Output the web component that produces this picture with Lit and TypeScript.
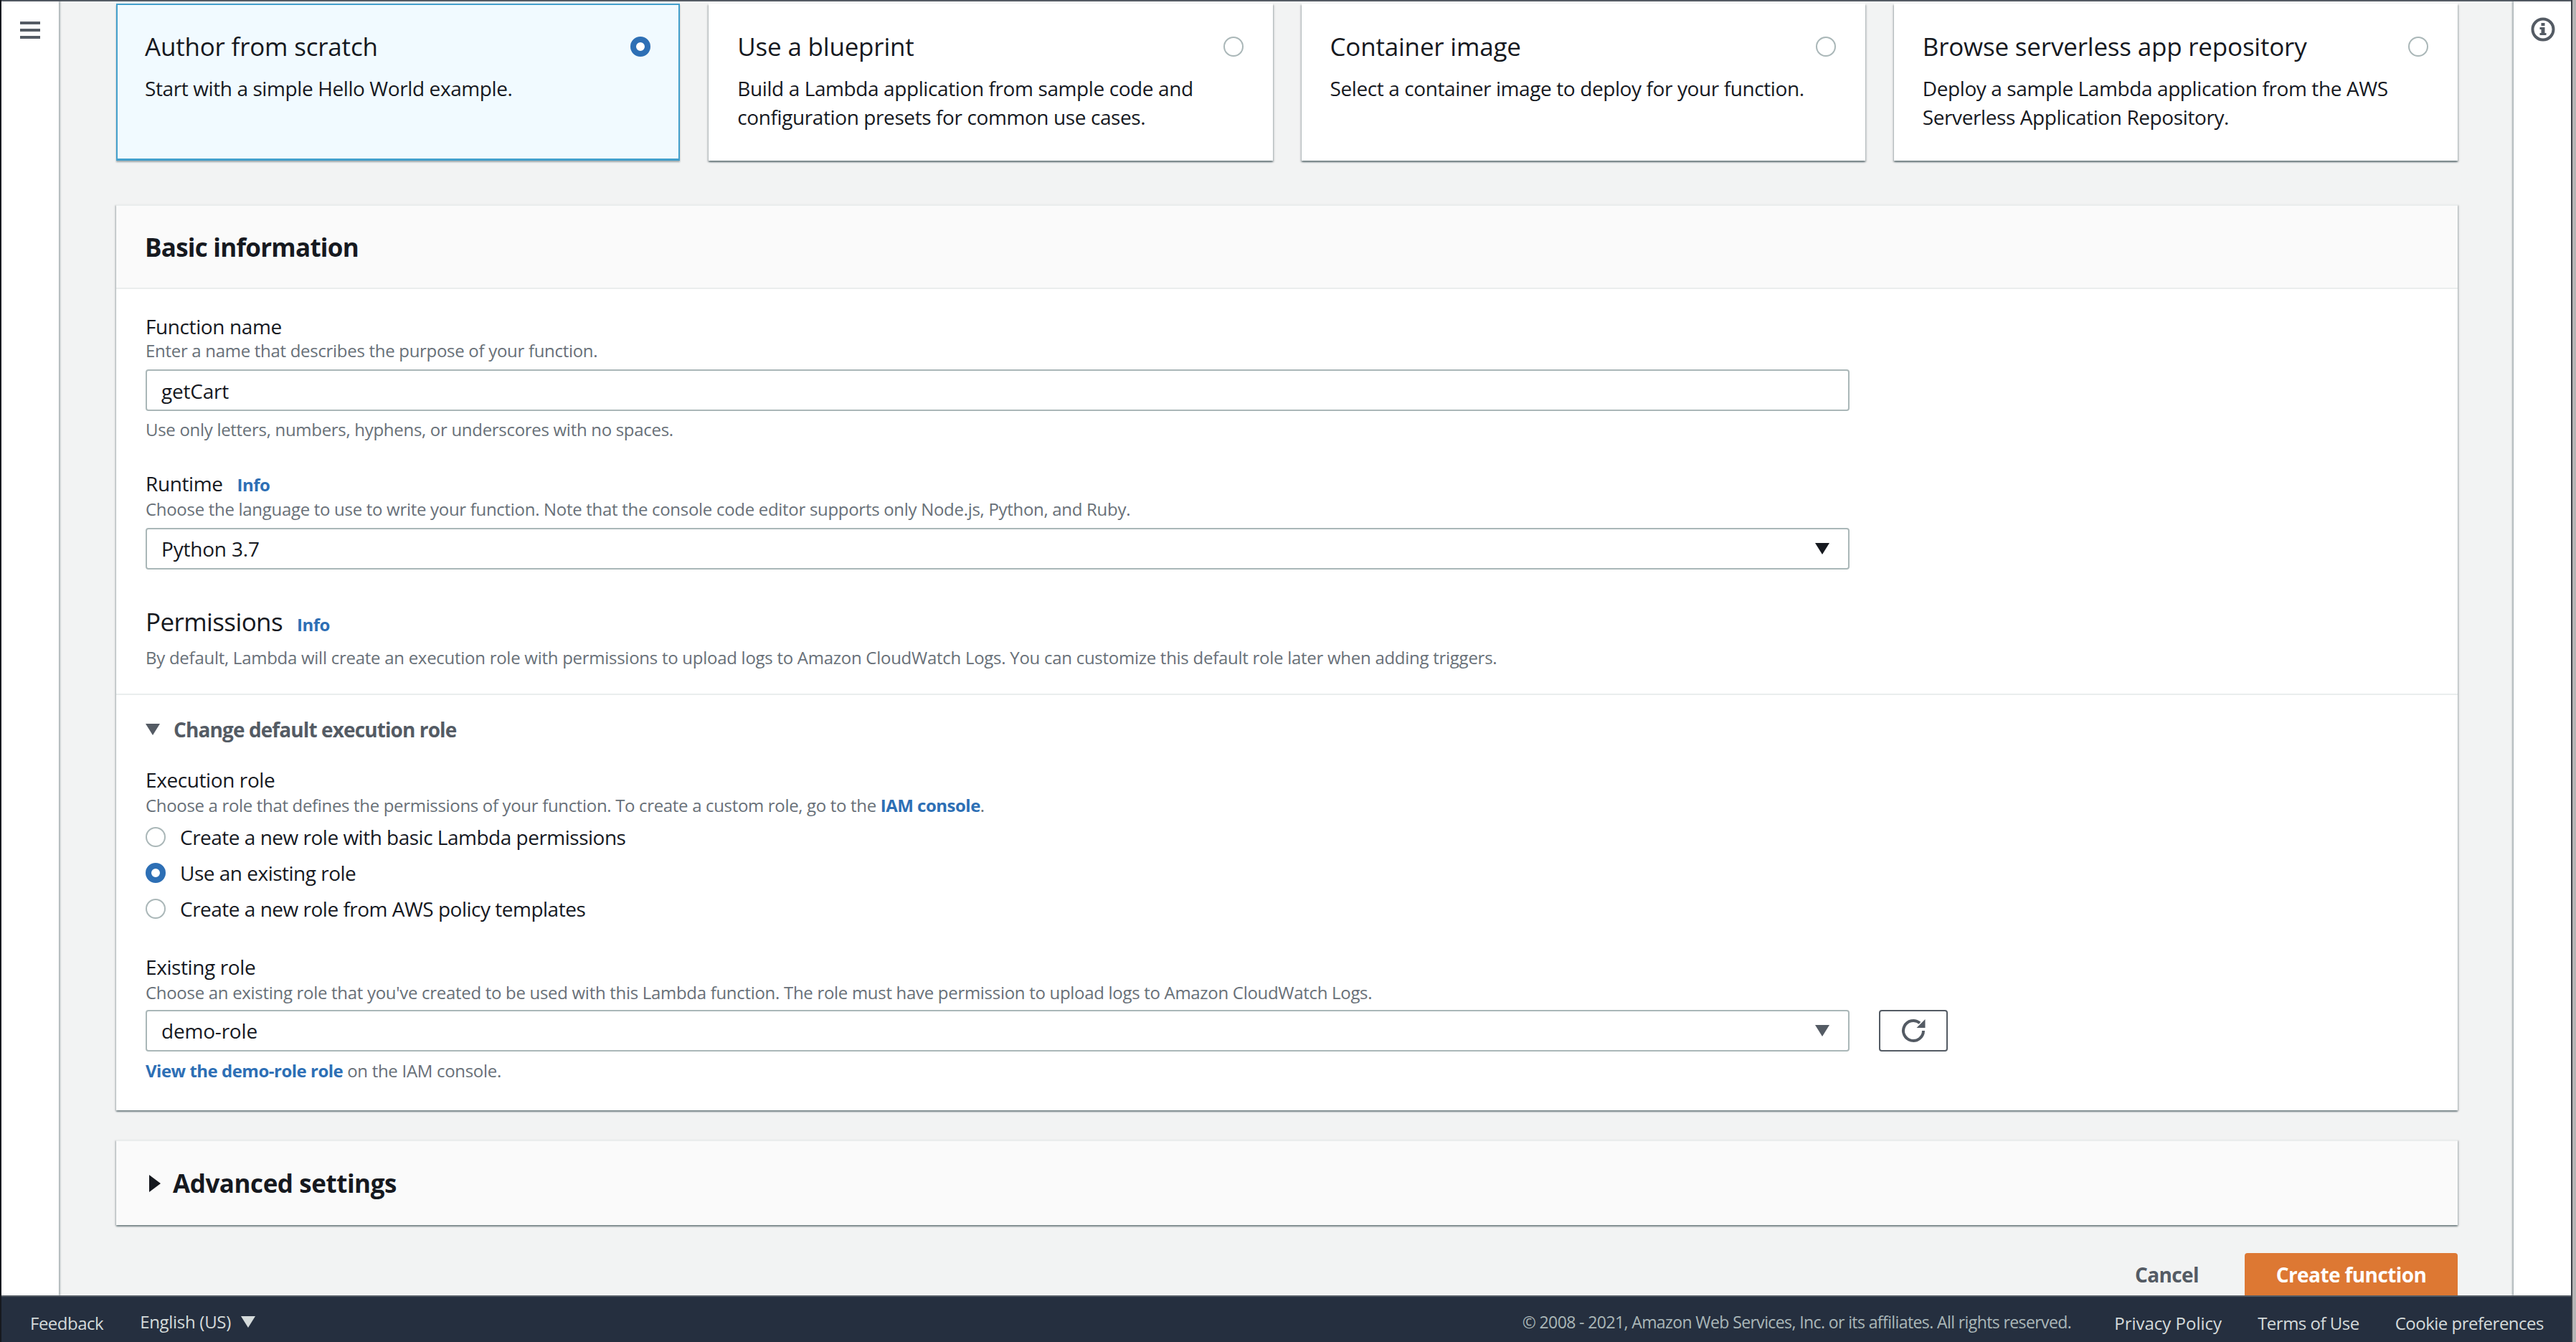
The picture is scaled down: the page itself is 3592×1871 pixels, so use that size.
import { LitElement, html, css, svg } from "lit";
import { customElement } from "lit/decorators.js";

const caret = (cls: string) => html`<svg class=${cls} viewBox="0 0 20 16"><path d="M0 0H20L10 16Z" fill="currentColor"/></svg>`;

@customElement("app-root")
export class AppRoot extends LitElement {
  static styles = css`
    :host { display: block; width: 3592px; height: 1871px; overflow: hidden; background: #b5b5b5;
      font-family: "Open Sans", "Noto Sans", sans-serif; font-size: 28px; line-height: 40px; color: #16191f; letter-spacing: -0.4px; }
    * { box-sizing: border-box; }
    .frame { width: 3587px; height: 1871px; border-left: 2px solid #16191f; border-right: 2px solid #3a3f46; display: flex; flex-direction: column; background: #fff; }
    .topline { height: 2px; background: #545b64; flex: none; }
    .middle { flex: 1; min-height: 0; display: flex; }
    .rail { flex: none; width: 80px; background: #fff; position: relative; z-index: 1; box-shadow: 2px 0 2px rgba(0,28,36,.3); display: flex; flex-direction: column; }
    .rail.left { padding: 28px 0 0 26px; }
    .rail.right { padding: 21px 0 0 24px; box-shadow: -2px 0 2px rgba(0,28,36,.3); }
    .burger { width: 28px; height: 24px; display: flex; flex-direction: column; justify-content: space-between; }
    .burger i { display: block; height: 4px; background: #545b64; }
    .info-ico { width: 34px; height: 36px; color: #545b64; display: block; }
    .main { flex: 1; min-width: 0; background: #f2f3f3; padding: 3px 78px 0 80px; overflow: hidden; }
    .cards { display: grid; grid-template-columns: repeat(4, 1fr); gap: 40px; }
    .card { position: relative; height: 219px; background: #fff; padding: 40px 40px 0 40px; box-shadow: 0 2px 2px rgba(0,28,36,.45), 2px 2px 2px rgba(0,28,36,.12), -2px 2px 2px rgba(0,28,36,.12); }
    .card.on { background: #f1faff; box-shadow: inset 0 0 0 2px #44a0cc, inset 0 -3px 0 #44a0cc, 0 2px 2px rgba(0,28,36,.35); }
    .card h3 { margin: 0 0 18px; font-size: 35px; font-weight: 400; line-height: 40px; letter-spacing: -0.2px; }
    .card p { margin: 0; padding-right: 20px; }
    .card .radio { position: absolute; top: 46px; right: 41px; }
    .radio { width: 28px; height: 28px; border-radius: 50%; border: 2.5px solid #aab7b8; background: #fff; flex: none; display: block; }
    .radio.on { border: 8px solid #2d6fb5; }
    .panel { background: #fff; box-shadow: 0 2px 2px rgba(0,28,36,.45), 2px 1px 2px rgba(0,28,36,.12), -2px 1px 2px rgba(0,28,36,.12); }
    .basic { margin-top: 61px; }
    .phead { height: 118px; background: #fafafa; border-top: 2px solid #eaeded; border-bottom: 2px solid #eaeded; padding: 2px 40px 0; display: flex; align-items: center; }
    .phead h2 { margin: 0; font-size: 35px; font-weight: 700; letter-spacing: -0.75px; }
    .body { padding: 32px 40px 39px 41px; }
    .hint { font-size: 24px; line-height: 32px; color: #687078; letter-spacing: -0.3px; }
    .hint.up { margin-top: -2px; }
    .hint.tight { letter-spacing: -0.33px; }
    .control { width: 2376px; height: 58px; border: 2px solid #aab7b8; border-radius: 4px; background: #fff; padding: 0 20px; display: flex; align-items: center; justify-content: space-between; letter-spacing: -0.2px; }
    .control.low { padding-top: 2px; }
    .caret { width: 20px; height: 16px; color: #16191f; flex: none; margin-right: 6px; }
    .caret.grey { color: #545b64; }
    .m8 { margin-top: 10px; }
    .m11 { margin-top: 10px; }
    .m39 { margin-top: 39px; }
    .row-ctl { display: flex; gap: 41px; margin-top: 8px; }
    .label-row { display: flex; align-items: baseline; gap: 20px; }
    .info { color: #2d6fb5; font-size: 24px; font-weight: 700; letter-spacing: -0.5px; }
    .perm { margin-top: 49px; font-size: 35px; line-height: 48px; letter-spacing: -0.6px; }
    .perm-desc { margin-top: 6px; letter-spacing: -0.27px; }
    .rule { height: 2px; background: #eaeded; margin: 34px -40px 0 -41px; }
    .toggle { margin-top: 28px; display: flex; align-items: center; gap: 13px; color: #545b64; font-weight: 700; letter-spacing: -0.9px; }
    .toggle svg { width: 20px; height: 16px; }
    .sec { margin-top: 30px; }
    .radios { margin-top: 8px; display: flex; flex-direction: column; gap: 10px; }
    .opt { display: flex; align-items: center; gap: 20px; height: 40px; letter-spacing: -0.5px; }
    .existing { margin-top: 41px; }
    .refresh { width: 96px; height: 58px; border: 2px solid #545b64; border-radius: 4px; background: #fff; display: flex; align-items: center; justify-content: center; color: #545b64; }
    .refresh svg { width: 36px; height: 38px; }
    .view { margin-top: 11px; }
    a { color: #2d6fb5; font-weight: 700; text-decoration: none; letter-spacing: -0.5px; }
    .advanced { margin-top: 41px; height: 119px; background: #fafafa; border-top: 2px solid #eaeded; padding: 0 40px; display: flex; align-items: center; gap: 17px; }
    .advanced svg { width: 16px; height: 24px; margin-left: 6px; color: #16191f; }
    .advanced b { font-size: 35px; font-weight: 700; letter-spacing: -0.45px; }
    .actions { margin-top: 39px; display: flex; justify-content: flex-end; align-items: center; gap: 64px; letter-spacing: -0.6px; }
    .cancel { color: #545b64; font-weight: 700; }
    .primary { width: 297px; height: 60px; background: #dd7833; border-radius: 4px 4px 0 0; color: #fff; font-weight: 700; display: flex; align-items: center; justify-content: center; }
    .footer { flex: none; height: 65px; background: #252f3f; border-top: 2px solid #545b64; display: flex; align-items: center; padding: 10px 38px 0 40px; color: #d5dbdb; font-size: 24px; letter-spacing: -0.5px; }
    .lang { margin-left: 51px; display: flex; align-items: center; gap: 14px; margin-bottom: 4px; letter-spacing: -0.3px; }
    .lang svg { width: 20px; height: 16px; color: #d5dbdb; }
    .copy { margin-left: auto; color: #aab7b8; margin-bottom: 4px; font-size: 23px; letter-spacing: -0.6px; }
    .flinks { display: flex; gap: 50px; margin-left: 60px; }
    .wide { letter-spacing: 0; }
  `;

  private cards = [
    ["Author from scratch", "Start with a simple Hello World example.", true],
    ["Use a blueprint", "Build a Lambda application from sample code and configuration presets for common use cases.", false],
    ["Container image", "Select a container image to deploy for your function.", false],
    ["Browse serverless app repository", "Deploy a sample Lambda application from the AWS Serverless Application Repository.", false],
  ] as const;

  private opts = [
    ["Create a new role with basic Lambda permissions", false],
    ["Use an existing role", true],
    ["Create a new role from AWS policy templates", false],
  ] as const;

  render() {
    return html`<div class="frame">
      <div class="topline"></div>
      <div class="middle">
        <div class="rail left"><div class="burger"><i></i><i></i><i></i></div></div>
        <div class="main">
          <div class="cards">
            ${this.cards.map(([t, d, on]) => html`<div class="card ${on ? "on" : ""}">
              <h3>${t}</h3><p>${d}</p><span class="radio ${on ? "on" : ""}"></span></div>`)}
          </div>
          <div class="panel basic">
            <div class="phead"><h2>Basic information</h2></div>
            <div class="body">
              <div>Function name</div>
              <div class="hint up">Enter a name that describes the purpose of your function.</div>
              <div class="control low m8">getCart</div>
              <div class="hint m11">Use only letters, numbers, hyphens, or underscores with no spaces.</div>
              <div class="label-row m39"><span>Runtime</span><span class="info">Info</span></div>
              <div class="hint up">Choose the language to use to write your function. Note that the console code editor supports only Node.js, Python, and Ruby.</div>
              <div class="control m8"><span>Python 3.7</span>${caret("caret")}</div>
              <div class="label-row perm"><span>Permissions</span><span class="info">Info</span></div>
              <div class="hint perm-desc">By default, Lambda will create an execution role with permissions to upload logs to Amazon CloudWatch Logs. You can customize this default role later when adding triggers.</div>
              <div class="rule"></div>
              <div class="toggle">${caret("caret grey")}<span>Change default execution role</span></div>
              <div class="sec">Execution role</div>
              <div class="hint tight">Choose a role that defines the permissions of your function. To create a custom role, go to the <a>IAM console</a>.</div>
              <div class="radios">
                ${this.opts.map(([t, on]) => html`<div class="opt"><span class="radio ${on ? "on" : ""}"></span><span>${t}</span></div>`)}
              </div>
              <div class="existing">Existing role</div>
              <div class="hint">Choose an existing role that you've created to be used with this Lambda function. The role must have permission to upload logs to Amazon CloudWatch Logs.</div>
              <div class="row-ctl">
                <div class="control"><span>demo-role</span>${caret("caret grey")}</div>
                <div class="refresh"><svg viewBox="0 0 36 38">${svg`<path d="M32 19A14 14 0 1 1 27 8.3" fill="none" stroke="currentColor" stroke-width="4"/><path d="M34.5 3V15H22.5Z" fill="currentColor"/>`}</svg></div>
              </div>
              <div class="hint view"><a>View the demo-role role</a> on the IAM console.</div>
            </div>
          </div>
          <div class="panel advanced"><svg viewBox="0 0 16 24"><path d="M0 0L16 12L0 24Z" fill="currentColor"/></svg><b>Advanced settings</b></div>
          <div class="actions"><span class="cancel">Cancel</span><div class="primary">Create function</div></div>
        </div>
        <div class="rail right"><svg class="info-ico" viewBox="0 0 34 36">${svg`<circle cx="17" cy="18" r="14.5" fill="none" stroke="currentColor" stroke-width="4"/><rect x="14.5" y="9" width="5" height="4" fill="currentColor"/><path d="M12.5 15H19.5V23H21.5V26H12.5V23H14.5V18H12.5Z" fill="currentColor"/>`}</svg></div>
      </div>
      <div class="footer">
        <span>Feedback</span>
        <span class="lang">English (US) ${caret("")}</span>
        <span class="copy">© 2008 - 2021, Amazon Web Services, Inc. or its affiliates. All rights reserved.</span>
        <div class="flinks"><span class="wide">Privacy Policy</span><span>Terms of Use</span><span>Cookie preferences</span></div>
      </div>
    </div>`;
  }
}
